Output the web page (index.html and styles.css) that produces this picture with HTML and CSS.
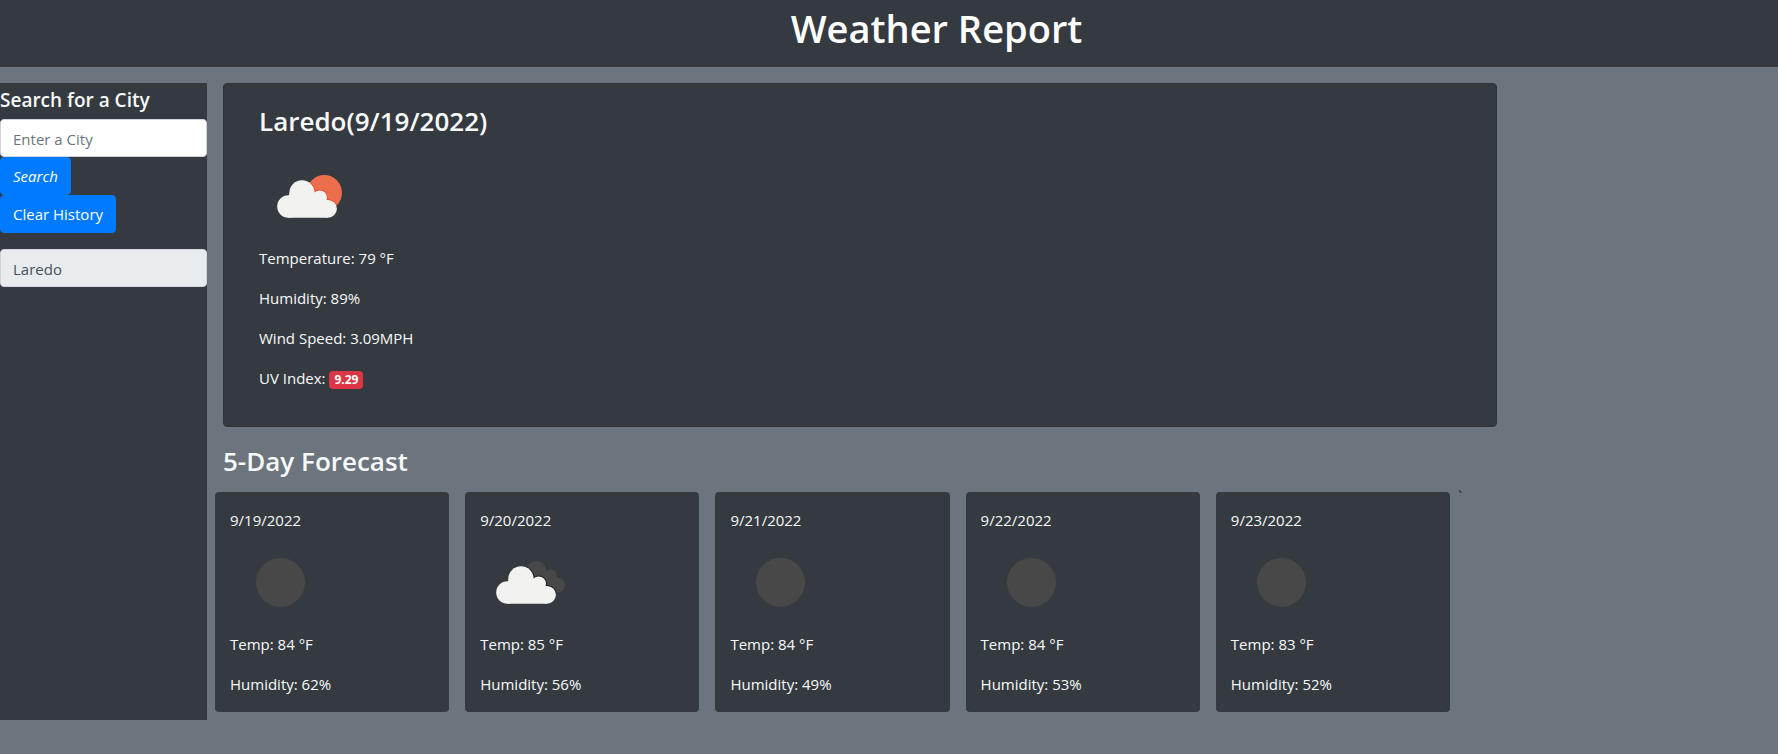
FILE: index.html
```html
<!DOCTYPE html>
<html lang="en">
<head>
<meta charset="utf-8">
<meta name="viewport" content="width=device-width, initial-scale=1">
<title>Weather Report</title>
<link rel="stylesheet" href="styles.css">
</head>
<body>
<svg class="sprite" aria-hidden="true">
  <symbol id="cloud" viewBox="0 0 100 100">
    <circle cx="43" cy="46" r="12.7"/>
    <circle cx="29.4" cy="59.5" r="11.2"/>
    <circle cx="60.7" cy="50.7" r="7.3"/>
    <circle cx="69" cy="61.8" r="8.9"/>
    <path d="M30.3 48.3V46H55.7L64 52V54L69 53V70.7H29.4V48.3Z"/>
  </symbol>
  <symbol id="clear-night" viewBox="0 0 100 100">
    <circle cx="50.5" cy="50.3" r="24.5" fill="#484848"/>
  </symbol>
</svg>
<header class="site-header">
  <h1>Weather Report</h1>
</header>
<div class="layout">
  <aside class="sidebar">
    <form class="search">
      <label class="search-title" for="city">Search for a City</label>
      <input class="field" id="city" type="text" placeholder="Enter a City">
      <button class="btn btn-search" type="button">Search</button>
      <button class="btn" type="button">Clear History</button>
      <input class="field history" type="text" value="Laredo" aria-label="Previous search" readonly>
    </form>
  </aside>
  <main class="content">
    <section class="today">
      <h2>Laredo(9/19/2022)</h2>
      <svg class="icon" viewBox="0 -1 100 100" role="img" aria-label="Few clouds">
        <circle cx="65.3" cy="45.7" r="17.7" fill="#ec6e4c"/>
        <clipPath id="sun-clip"><circle cx="65.3" cy="45.7" r="17.7"/></clipPath>
        <g clip-path="url(#sun-clip)"><use href="#cloud" width="100" height="100" class="sun-edge"/></g>
        <use href="#cloud" width="100" height="100" class="cloud"/>
      </svg>
      <p>Temperature: 79 °F</p>
      <p>Humidity: 89%</p>
      <p>Wind Speed: 3.09MPH</p>
      <p>UV Index: <span class="badge">9.29</span></p>
    </section>
    <h2 class="forecast-title">5-Day Forecast</h2>
    <section class="forecast">
      <article class="day">
        <p>9/19/2022</p>
        <svg class="icon" role="img" aria-label="Clear night"><use href="#clear-night"/></svg>
        <p>Temp: 84 °F</p>
        <p>Humidity: 62%</p>
      </article>
      <article class="day">
        <p>9/20/2022</p>
        <svg class="icon" viewBox="0 0 100 100" role="img" aria-label="Broken clouds">
          <g fill="#484848">
            <circle cx="56.3" cy="39" r="10"/>
            <circle cx="70.7" cy="43.7" r="6.3"/>
            <circle cx="77.7" cy="53" r="7.3"/>
            <path d="M56 40L66 39L74 48L77.7 60.3H68L52 46Z"/>
          </g>
          <clipPath id="rear-clip">
            <circle cx="56.3" cy="39" r="10"/>
            <circle cx="70.7" cy="43.7" r="6.3"/>
            <circle cx="77.7" cy="53" r="7.3"/>
            <path d="M56 40L66 39L74 48L77.7 60.3H68L52 46Z"/>
          </clipPath>
          <g clip-path="url(#rear-clip)"><use href="#cloud" x="-2" y="1" width="100" height="100" class="cloud-edge"/></g>
          <use href="#cloud" x="-2" y="1" width="100" height="100" class="cloud"/>
        </svg>
        <p>Temp: 85 °F</p>
        <p>Humidity: 56%</p>
      </article>
      <article class="day">
        <p>9/21/2022</p>
        <svg class="icon" role="img" aria-label="Clear night"><use href="#clear-night"/></svg>
        <p>Temp: 84 °F</p>
        <p>Humidity: 49%</p>
      </article>
      <article class="day">
        <p>9/22/2022</p>
        <svg class="icon" role="img" aria-label="Clear night"><use href="#clear-night"/></svg>
        <p>Temp: 84 °F</p>
        <p>Humidity: 53%</p>
      </article>
      <article class="day">
        <p>9/23/2022</p>
        <svg class="icon" role="img" aria-label="Clear night"><use href="#clear-night"/></svg>
        <p>Temp: 83 °F</p>
        <p>Humidity: 52%</p>
      </article>
      <span class="stray">`</span>
    </section>
  </main>
</div>
</body>
</html>
```

FILE: styles.css
```css
* {
  box-sizing: border-box;
}

body {
  margin: 0;
  background: #6c757d;
  color: #f8f9fa;
  font-family: "Segoe UI", "Open Sans", "Noto Sans", sans-serif;
  font-size: 15px;
  line-height: 24px;
}

h1,
h2,
p {
  margin: 0;
}

.sprite {
  display: none;
}

.site-header {
  background: #343a40;
  color: #fff;
  padding: 4px 0 15px 95px;
  text-align: center;
}

h1 {
  font-size: 38px;
  font-weight: 600;
  line-height: 48px;
}

h2 {
  font-size: 26px;
  font-weight: 600;
  line-height: 34px;
  margin-bottom: 8px;
}

.layout {
  display: grid;
  grid-template-columns: 207fr 1298fr 273fr;
  margin-top: 16px;
}

.sidebar {
  background: #343a40;
}

.search {
  display: flex;
  flex-direction: column;
  align-items: flex-start;
  padding-top: 5px;
}

.search-title {
  font-size: 19px;
  font-weight: 600;
  line-height: 24px;
  margin-bottom: 7px;
}

.field {
  width: 100%;
  height: 38px;
  padding: 8px 12px 6px;
  border: 1px solid #ced4da;
  border-radius: 4px;
  background: #fff;
  color: #495057;
  font: inherit;
}

.field::placeholder {
  color: #6c757d;
  opacity: 1;
}

.history {
  margin-top: 16px;
  background: #e9ecef;
}

.btn {
  height: 38px;
  padding: 6px 12px;
  border: 1px solid #007bff;
  border-radius: 4px;
  background: #007bff;
  color: #fff;
  font: inherit;
}

.btn-search {
  font-style: italic;
}

.content {
  padding-bottom: 8px;
}

.today {
  margin: 0 8px 0 16px;
  padding: 20px 35px;
  border: 1px solid #2e3338;
  border-radius: 4px;
  background: #343a40;
}

.today p {
  margin-bottom: 16px;
}

.today p:last-child {
  padding-bottom: 0;
}

.icon {
  display: block;
  width: 100px;
  height: 100px;
}

.cloud {
  fill: #f2f2f0;
}

.sun-edge {
  stroke: #e8502c;
  stroke-width: 2;
}

.cloud-edge {
  stroke: #222;
  stroke-width: 2;
}

.badge {
  display: inline-block;
  padding: 3px 5px;
  border-radius: 4px;
  background: #dc3545;
  color: #fff;
  font-size: 12px;
  font-weight: 700;
  line-height: 12px;
}

.forecast-title {
  margin: 17px 16px 14px;
}

.forecast {
  display: flex;
}

.day {
  flex: 1;
  margin: 0 8px;
  padding: 16px 15px;
  border-radius: 4px;
  background: #343a40;
}

.day p + p {
  margin-top: 16px;
}

.stray {
  flex: none;
  width: 47px;
  color: #212529;
  line-height: 8px;
}
```
